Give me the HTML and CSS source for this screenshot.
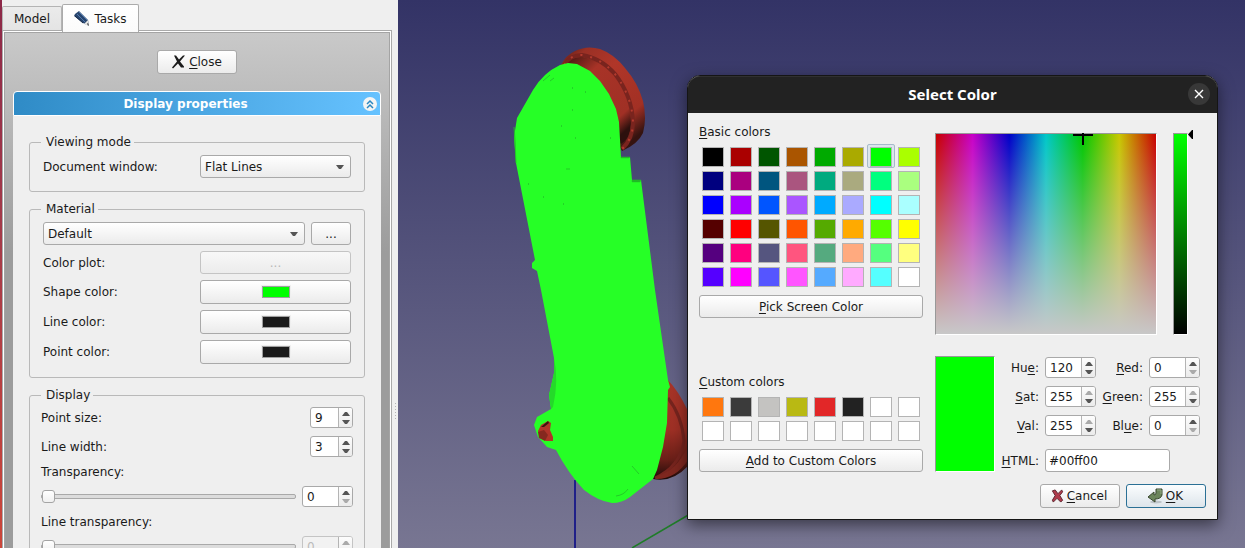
FILE: index.html
```html
<!DOCTYPE html>
<html lang="en">
<head>
<meta charset="utf-8">
<title>Select Color</title>
<link rel="stylesheet" href="styles.css">
</head>
<body>
<svg class="defs" aria-hidden="true">
  <symbol id="up" viewBox="0 0 8 4"><path d="M0 4L3 0H5L8 4Z"/></symbol>
  <symbol id="down" viewBox="0 0 8 4"><path d="M0 0H8L5 4H3Z"/></symbol>
</svg>
<div class="app">
  <div class="edge"></div>
  <aside class="dock">
    <div class="tabs" role="tablist">
      <button class="tab" role="tab">Model</button>
      <button class="tab tab-active" role="tab" aria-selected="true">
        <svg class="icon" viewBox="0 0 16 16"><path d="M1 3L5 0L14 9L15 15L9 12L0 5Z" fill="#29466f"/><path d="M3 3L11 11M5 1L13 9" stroke="#5179ad" stroke-width="1"/><path d="M1 5L9 12" stroke="#182c4b"/><path d="M10 13L14 9L15 15Z" fill="#e5e5e3"/><path d="M13 13L14 12L15 15Z" fill="#222"/></svg>
        Tasks
      </button>
    </div>
    <main class="pane">
      <div class="pane-scroll">
        <div class="close-row">
          <button class="btn close-btn">
            <svg class="icon-small" viewBox="0 0 13 13"><path d="M2 0H4L7 4L11 0H13L8 6L12 11V12H9L6 8L1 13L0 12L5 6Z" fill="#1b1b1b"/></svg>
            <span><u>C</u>lose</span>
          </button>
        </div>
        <section class="task-box">
          <header class="task-head">
            <h2>Display properties</h2>
            <button class="collapse" aria-label="Collapse"><svg viewBox="0 0 14 14"><circle cx="7" cy="7" r="7" fill="#f4f4f4"/><path d="M4 7L7 4L10 7M4 11L7 8L10 11" fill="none" stroke="#2c87c0" stroke-width="1.5"/></svg></button>
          </header>
          <div class="task-body">
            <fieldset class="group">
              <legend>Viewing mode</legend>
              <div class="row row-mode">
                <label for="mode">Document window:</label>
                <div class="combo"><select id="mode"><option>Flat Lines</option></select><svg class="arrow"><use href="#down"/></svg></div>
              </div>
            </fieldset>
            <fieldset class="group">
              <legend>Material</legend>
              <div class="material">
                <div class="combo combo-grow"><select aria-label="Material"><option>Default</option></select><svg class="arrow"><use href="#down"/></svg></div>
                <button class="btn more">...</button>
              </div>
              <div class="row row-plot"><label for="plot">Color plot:</label><button id="plot" class="btn" disabled>...</button></div>
              <div class="row row-color"><label for="shape">Shape color:</label><button id="shape" class="btn"><i class="chip chip-green"></i></button></div>
              <div class="row row-color"><label for="line">Line color:</label><button id="line" class="btn"><i class="chip"></i></button></div>
              <div class="row row-color"><label for="point">Point color:</label><button id="point" class="btn"><i class="chip"></i></button></div>
            </fieldset>
            <fieldset class="group group-display">
              <legend>Display</legend>
              <div class="line line-first"><label for="psize">Point size:</label>
                <div class="spin spin-s"><input id="psize" type="number" value="9"><div class="steps"><button aria-label="Increase"><svg><use href="#up"/></svg></button><button aria-label="Decrease"><svg><use href="#down"/></svg></button></div></div></div>
              <div class="line"><label for="lwidth">Line width:</label>
                <div class="spin spin-s"><input id="lwidth" type="number" value="3"><div class="steps"><button aria-label="Increase"><svg><use href="#up"/></svg></button><button aria-label="Decrease"><svg><use href="#down"/></svg></button></div></div></div>
              <label class="slider-label" for="transp">Transparency:</label>
              <div class="line line-slider"><input id="transp" type="range" value="0">
                <div class="spin"><input aria-label="Transparency value" type="number" value="0"><div class="steps"><button aria-label="Increase"><svg><use href="#up"/></svg></button><button aria-label="Decrease" disabled><svg><use href="#down"/></svg></button></div></div></div>
              <label class="slider-label" for="ltransp">Line transparency:</label>
              <div class="line line-slider"><input id="ltransp" type="range" value="0">
                <div class="spin spin-off"><input aria-label="Line transparency value" type="number" value="0" disabled><div class="steps"><button aria-label="Increase" disabled><svg><use href="#up"/></svg></button><button aria-label="Decrease" disabled><svg><use href="#down"/></svg></button></div></div></div>
            </fieldset>
          </div>
        </section>
      </div>
    </main>
    <div class="grip"></div>
  </aside>

  <section class="view">
    <svg class="scene" viewBox="398 0 847 548" role="img" aria-label="3D model">
      <defs>
        <linearGradient id="wheel" x1="0" y1="0" x2=".7" y2="1"><stop offset="0" stop-color="#4a1712"/><stop offset=".15" stop-color="#9a3025"/><stop offset=".4" stop-color="#b03629"/><stop offset=".82" stop-color="#a23024"/><stop offset="1" stop-color="#351310"/></linearGradient>
        <linearGradient id="inner" x1="0" y1="0" x2=".7" y2="1"><stop offset="0" stop-color="#3c1410"/><stop offset=".3" stop-color="#a83327"/><stop offset=".85" stop-color="#a03025"/><stop offset="1" stop-color="#2c100d"/></linearGradient>
        <linearGradient id="wheel2" x1="0" y1="0" x2="0" y2="1"><stop offset="0" stop-color="#a93528"/><stop offset=".5" stop-color="#9f3025"/><stop offset=".8" stop-color="#6a1f18"/><stop offset="1" stop-color="#1b0a08"/></linearGradient>
      </defs>
      <path d="M575 480V548" stroke="#202088" stroke-width="2"/>
      <path d="M632 548L690 514" stroke="#1f7c28" stroke-width="1.5"/>
      <path d="M561 65Q566 55 575 51Q587 45 600 49Q614 54 625 68Q638 83 643 101Q647 118 643 133Q638 144 622 151L600 110Z" fill="url(#wheel)"/>
      <path d="M565 64Q572 56 583 57Q604 62 618 80Q631 99 631 124Q630 139 621 144L600 120Z" fill="url(#inner)"/>
      <path d="M564 65Q570 55 582 55Q601 58 615 74Q632 96 633 122Q633 139 622 149" fill="none" stroke="#79241e" stroke-width="4"/>
      <path d="M564 65Q570 55 582 55Q601 58 615 74Q632 96 633 122Q633 139 622 149" fill="none" stroke="#b43a2e" stroke-width="2" stroke-dasharray="2 8"/>
      <path d="M667 379Q678 390 688 411V466Q672 483 653 479Z" fill="url(#wheel2)"/>
      <path d="M668 398Q682 416 684 441Q680 467 655 478" fill="none" stroke="#76241e" stroke-width="3"/>
      <path d="M688 460Q675 480 655 479L660 475Q676 470 687 448Z" fill="#7e271f"/>
      <path d="M568 63L577 64L590 71L600 81L609 94L616 109L619 122L621 157H630L632 180H641L655 290L668 380L670 387L668 390L667 423L663 447L657 470L653 479L630 497Q622 503 612 503Q598 501 584 490Q568 473 556 450L547 447L538 437L534 425L537 417L551 409L549 395L554 373V358L541 290L537 271L532 268V263L535 260L516 163L514 137L517 118L533 90Q543 73 560 65Z" fill="#26ff26"/>
      <path d="M554 358Q559 380 553 407L551 409L549 395L554 373Z" fill="#25d92a"/>
      <path d="M514 127L516 163L515 137ZM621 157H630L629 158H621ZM632 180H641L640 182H632Z" fill="#22b427" stroke="#22c427" stroke-width=".5"/>
      <path d="M543 81L550 75M550 81L554 78M632 466L639 474M616 496Q624 495 628 489M566 169H570" fill="none" stroke="#22b427" stroke-width=".7"/>
      <path d="M572 88h1M585 92h1M572 110h1M561 126h1M575 138h1M610 138h1M528 184h1M543 197h1M563 204h1" stroke="#21a827"/>
      <path d="M541 425L548 421L551 423L550 430L553 437V441L546 441L540 437L538 431Z" fill="#b03429"/>
      <path d="M538 432L544 430L548 435L545 441L539 438Z" fill="#85281f"/><path d="M541 427L548 421L549 423L544 427Z" fill="#3a140f"/>
    </svg>
  </section>

  <div class="dialog" role="dialog" aria-labelledby="dlg-title">
    <header class="titlebar">
      <h1 id="dlg-title">Select Color</h1>
      <button class="win-close" aria-label="Close dialog"><svg viewBox="0 0 22 22"><path d="M7 7L15 15M15 7L7 15" stroke="#fff" stroke-width="1.4"/></svg></button>
    </header>
    <div class="dialog-body">
      <div class="palettes">
        <h3><u>B</u>asic colors</h3>
        <div class="grid">
          <button style="--c:#000000" aria-label="#000000"></button><button style="--c:#aa0000" aria-label="#aa0000"></button><button style="--c:#005500" aria-label="#005500"></button><button style="--c:#aa5500" aria-label="#aa5500"></button><button style="--c:#00aa00" aria-label="#00aa00"></button><button style="--c:#aaaa00" aria-label="#aaaa00"></button><button class="selected" style="--c:#00ff00" aria-label="#00ff00"></button><button style="--c:#aaff00" aria-label="#aaff00"></button>
          <button style="--c:#00007f" aria-label="#00007f"></button><button style="--c:#aa007f" aria-label="#aa007f"></button><button style="--c:#00557f" aria-label="#00557f"></button><button style="--c:#aa557f" aria-label="#aa557f"></button><button style="--c:#00aa7f" aria-label="#00aa7f"></button><button style="--c:#aaaa7f" aria-label="#aaaa7f"></button><button style="--c:#00ff7f" aria-label="#00ff7f"></button><button style="--c:#aaff7f" aria-label="#aaff7f"></button>
          <button style="--c:#0000ff" aria-label="#0000ff"></button><button style="--c:#aa00ff" aria-label="#aa00ff"></button><button style="--c:#0055ff" aria-label="#0055ff"></button><button style="--c:#aa55ff" aria-label="#aa55ff"></button><button style="--c:#00aaff" aria-label="#00aaff"></button><button style="--c:#aaaaff" aria-label="#aaaaff"></button><button style="--c:#00ffff" aria-label="#00ffff"></button><button style="--c:#aaffff" aria-label="#aaffff"></button>
          <button style="--c:#550000" aria-label="#550000"></button><button style="--c:#ff0000" aria-label="#ff0000"></button><button style="--c:#555500" aria-label="#555500"></button><button style="--c:#ff5500" aria-label="#ff5500"></button><button style="--c:#55aa00" aria-label="#55aa00"></button><button style="--c:#ffaa00" aria-label="#ffaa00"></button><button style="--c:#55ff00" aria-label="#55ff00"></button><button style="--c:#ffff00" aria-label="#ffff00"></button>
          <button style="--c:#55007f" aria-label="#55007f"></button><button style="--c:#ff007f" aria-label="#ff007f"></button><button style="--c:#55557f" aria-label="#55557f"></button><button style="--c:#ff557f" aria-label="#ff557f"></button><button style="--c:#55aa7f" aria-label="#55aa7f"></button><button style="--c:#ffaa7f" aria-label="#ffaa7f"></button><button style="--c:#55ff7f" aria-label="#55ff7f"></button><button style="--c:#ffff7f" aria-label="#ffff7f"></button>
          <button style="--c:#5500ff" aria-label="#5500ff"></button><button style="--c:#ff00ff" aria-label="#ff00ff"></button><button style="--c:#5555ff" aria-label="#5555ff"></button><button style="--c:#ff55ff" aria-label="#ff55ff"></button><button style="--c:#55aaff" aria-label="#55aaff"></button><button style="--c:#ffaaff" aria-label="#ffaaff"></button><button style="--c:#55ffff" aria-label="#55ffff"></button><button style="--c:#ffffff" aria-label="#ffffff"></button>
        </div>
        <button class="btn wide"><span><u>P</u>ick Screen Color</span></button>
        <h3 class="custom-title"><u>C</u>ustom colors</h3>
        <div class="grid">
          <button style="--c:#ff770e" aria-label="Custom 1"></button><button style="--c:#3b3b3b" aria-label="Custom 2"></button><button style="--c:#c4c3c1" aria-label="Custom 3"></button><button style="--c:#b9b913" aria-label="Custom 4"></button><button style="--c:#e22728" aria-label="Custom 5"></button><button style="--c:#222222" aria-label="Custom 6"></button><button style="--c:#fff" aria-label="Custom 7"></button><button style="--c:#fff" aria-label="Custom 8"></button>
          <button style="--c:#fff" aria-label="Custom 9"></button><button style="--c:#fff" aria-label="Custom 10"></button><button style="--c:#fff" aria-label="Custom 11"></button><button style="--c:#fff" aria-label="Custom 12"></button><button style="--c:#fff" aria-label="Custom 13"></button><button style="--c:#fff" aria-label="Custom 14"></button><button style="--c:#fff" aria-label="Custom 15"></button><button style="--c:#fff" aria-label="Custom 16"></button>
        </div>
        <button class="btn wide"><span><u>A</u>dd to Custom Colors</span></button>
      </div>
      <div class="picker">
        <div class="fields">
          <div class="sunken hue"><svg class="cross" viewBox="0 0 20 12"><path d="M0 2H20M10 0V12" stroke="#000" stroke-width="2"/></svg></div>
          <div class="sunken value"></div>
          <svg class="marker" viewBox="0 0 5 9"><path d="M0 4.5L4 0H5V9H4Z"/></svg>
        </div>
        <div class="values">
          <div class="sunken preview"></div>
          <div class="numbers">
            <label for="h">Hu<u>e</u>:</label><div class="spin"><input id="h" type="number" value="120"><div class="steps"><button aria-label="Increase"><svg><use href="#up"/></svg></button><button aria-label="Decrease"><svg><use href="#down"/></svg></button></div></div>
            <label for="r"><u>R</u>ed:</label><div class="spin"><input id="r" type="number" value="0"><div class="steps"><button aria-label="Increase"><svg><use href="#up"/></svg></button><button aria-label="Decrease" disabled><svg><use href="#down"/></svg></button></div></div>
            <label for="s"><u>S</u>at:</label><div class="spin"><input id="s" type="number" value="255"><div class="steps"><button aria-label="Increase" disabled><svg><use href="#up"/></svg></button><button aria-label="Decrease"><svg><use href="#down"/></svg></button></div></div>
            <label for="g"><u>G</u>reen:</label><div class="spin"><input id="g" type="number" value="255"><div class="steps"><button aria-label="Increase" disabled><svg><use href="#up"/></svg></button><button aria-label="Decrease"><svg><use href="#down"/></svg></button></div></div>
            <label for="v"><u>V</u>al:</label><div class="spin"><input id="v" type="number" value="255"><div class="steps"><button aria-label="Increase" disabled><svg><use href="#up"/></svg></button><button aria-label="Decrease"><svg><use href="#down"/></svg></button></div></div>
            <label for="b">Bl<u>u</u>e:</label><div class="spin"><input id="b" type="number" value="0"><div class="steps"><button aria-label="Increase"><svg><use href="#up"/></svg></button><button aria-label="Decrease" disabled><svg><use href="#down"/></svg></button></div></div>
            <label class="html-label" for="html"><u>H</u>TML:</label><input class="html-input" id="html" type="text" value="#00ff00">
          </div>
        </div>
        <div class="actions">
          <button class="btn"><svg class="icon-small" viewBox="0 0 13 15"><path d="M1 2L4 1L7 5L11 1L12 3L9 7L12 12L10 14L6 10L2 14L1 12L4 7Z" fill="#b03a4c" stroke="#58232c"/></svg><span><u>C</u>ancel</span></button>
          <button class="btn primary"><svg class="icon" viewBox="0 0 16 16"><ellipse cx="9" cy="14" rx="6" ry="1.5" fill="#bcc3c8"/><path d="M9 1H15V7Q14 11 8 11V14L1 9L7 4V7Q9 7 9 5Z" fill="#6b855b" stroke="#39472f"/><path d="M10 2H14V6" fill="none" stroke="#94a884"/></svg><span><u>O</u>K</span></button>
        </div>
      </div>
    </div>
  </div>
</div>
</body>
</html>
```

FILE: styles.css
```css
* { box-sizing: border-box; }
body, button, input, select { font: 12px/16px "DejaVu Sans", sans-serif; color: #1a1a1a; }
body { margin: 0; overflow: hidden; background: #efefef; }
h1, h2, h3 { margin: 0; }
h3 { font-size: 12px; font-weight: 400; }
button { padding: 0; margin: 0; }
u { text-underline-offset: 2px; }
svg { display: block; }
.defs { position: absolute; width: 0; height: 0; }

.app { position: relative; display: flex; height: 100vh; overflow: hidden; }
.edge { flex: none; width: 2px; background: linear-gradient(#8c2848, #a33a4a 40%, #cb463a); }

/* Left dock */
.dock { position: relative; flex: none; width: 396px; display: flex; flex-direction: column; padding: 4px 6px 0 0; }
.tabs { display: flex; align-items: flex-end; height: 26px; }
.tab { height: 24px; width: 60px; border: 1px solid #b4b4b4; border-bottom: 0; border-radius: 2px 2px 0 0; background: linear-gradient(#ebebeb, #e4e4e4); display: flex; align-items: center; justify-content: center; gap: 4px; }
.tab-active { position: relative; z-index: 1; width: 77px; height: 28px; margin-bottom: -2px; background: linear-gradient(#fff, #fbfbfb); border-color: #ababab; }
.icon { width: 16px; height: 16px; }
.icon-small { width: 13px; height: 14px; }
.pane { flex: none; border: 1px solid #aaa; padding: 1px; background: #fff; }
.pane-scroll { border: 1px solid #a4a4a4; background: linear-gradient(#c9c9c9, #9c9c9c 220px); padding: 17px 8px 10px 8px; }
.close-row { display: flex; justify-content: center; padding-bottom: 17px; }
.btn { height: 24px; border: 1px solid #a9a9a9; border-radius: 3px; background: linear-gradient(#fff, #ebebeb); display: flex; align-items: center; justify-content: center; gap: 4px; }
.btn:disabled { color: #b8b8b8; border-color: #c4c4c4; background: linear-gradient(#f8f8f8, #ececec); }
.close-btn { width: 80px; }
.task-head { height: 25px; border: 1px solid #fff; border-radius: 4px 4px 0 0; background: linear-gradient(90deg, #2f8bc6, #66c2ff); display: flex; align-items: center; padding-right: 3px; }
.task-head h2 { flex: 1; padding-right: 6px; text-align: center; color: #fff; font-size: 12px; }
.collapse { width: 14px; height: 14px; border: 0; background: none; }
.task-body { background: #efefef; padding: 18px 16px 16px; display: flex; flex-direction: column; gap: 9px; }

.group { margin: 0; min-width: 0; border: 1px solid #b9b9b9; border-radius: 3px; padding: 5px 13px 13px; }
.group legend { height: 16px; padding: 0 3px 0 5px; margin-left: -2px; }
.row { display: grid; grid-template-columns: 157px 1fr; align-items: center; }
.row .btn { width: 100%; }
.row-plot { margin: 6px 0; }
.row-plot .btn { height: 23px; }
.row-color + .row-color { margin-top: 6px; }
.combo { position: relative; }
.combo-grow { flex: 1; }
select { appearance: none; display: block; width: 100%; height: 23px; padding: 0 20px 0 4px; border: 1px solid #a9a9a9; border-radius: 3px; background: linear-gradient(#fff, #ebebeb); }
.arrow { position: absolute; right: 7px; top: 10px; width: 8px; height: 4px; fill: #555; pointer-events: none; }
.material { display: flex; gap: 6px; }
.more { width: 40px; height: 23px; }
.chip { width: 28px; height: 12px; background: #1a1a1a; border: 1px solid #a0a0a0; outline: 1px solid #efefef; }
.chip-green { background: #0f0; }
.group-display { padding: 3px 11px 13px; }
.group-display legend { margin-left: 0; }
.line { display: flex; justify-content: space-between; align-items: center; margin-bottom: 8px; }
.line-first { margin-top: 1px; }
.line-slider { gap: 6px; margin: 6px 0 8px; }
.slider-label { display: block; height: 16px; margin-top: -1px; }
input[type="range"] { appearance: none; flex: 1; min-width: 0; height: 14px; margin: 0; background: none; }
input[type="range"]::-webkit-slider-runnable-track { height: 5px; border: 1px solid #a9a9a9; border-radius: 2px; background: #dcdcdc; }
input[type="range"]::-webkit-slider-thumb { appearance: none; width: 13px; height: 13px; margin-top: -5px; border: 1px solid #a4a4a4; border-radius: 3px; background: linear-gradient(#fff, #f0f0f0); }

.spin { flex: none; width: 51px; height: 21px; display: flex; border: 1px solid #a9a9a9; border-radius: 3px; background: #fff; overflow: hidden; }
.spin-s { width: 43px; }
.spin input { appearance: textfield; flex: 1; min-width: 0; width: 0; border: 0; padding: 0 0 0 4px; background: none; outline: 0; }
.spin input::-webkit-inner-spin-button { appearance: none; }
.steps { width: 14px; border-left: 1px solid #b4b4b4; display: flex; flex-direction: column; gap: 4px; justify-content: center; align-items: center; background: linear-gradient(#fdfdfd, #ebebeb); }
.steps button { width: 8px; height: 4px; border: 0; background: none; }
.steps svg { width: 8px; height: 4px; fill: #555; }
.steps button:disabled svg { fill: #aaa; }
.spin-off { background: #f2f2f2; border-color: #c4c4c4; }
.spin-off input { color: #bbb; }
.grip { position: absolute; right: 2px; top: 403px; width: 1px; height: 17px; background: repeating-linear-gradient(#b5b5b5 0 1px, transparent 1px 3px); }

/* 3D view */
.view { position: relative; flex: 1; min-width: 0; overflow: hidden; background: linear-gradient(#333366, #787692); }
.scene { width: 847px; height: 548px; }

/* Color dialog */
.dialog { position: absolute; top: 75px; right: 27px; width: 531px; border: 1px solid #151515; border-radius: 13px 13px 0 0; background: #efefef; box-shadow: 0 5px 16px rgba(0,0,0,.5); }
.titlebar { position: relative; height: 37px; display: flex; align-items: center; justify-content: center; border-radius: 12px 12px 0 0; background: #222; border-top: 1px solid #303030; padding-bottom: 2px; }
.titlebar h1 { font: 700 15px/20px "Noto Sans", sans-serif; color: #fff; }
.win-close { position: absolute; right: 7px; top: 6px; width: 22px; height: 22px; border: 0; border-radius: 50%; background: #383838; }
.dialog-body { display: flex; gap: 12px; padding: 11px 11px 11px; }
.palettes { flex: none; width: 224px; }
.grid { display: grid; grid-template-columns: repeat(8, 1fr); grid-auto-rows: 24px; margin: 4px 0 7px; }
.grid button { border: 1px solid transparent; background: none; padding: 2px; display: flex; }
.grid button::before { content: ""; flex: 1; height: 18px; border: 1px solid #b4b4b4; background: var(--c); }
.grid .selected { border-color: #a6bac9; border-radius: 2px; background: #dce6ed; }
.wide { width: 100%; height: 23px; }
.custom-title { margin-top: 56px; }
.picker { flex: 1; min-width: 0; padding-top: 9px; }
.sunken { border: 1px solid; border-color: #999 #fff #fff #999; }
.fields { display: flex; height: 202px; }
.hue { position: relative; width: 222px; background: linear-gradient(rgba(200,200,200,0), #c8c8c8), linear-gradient(90deg, #c80000, #c800c8, #0000c8, #00c8c8, #00c800, #c8c800, #c80000); }
.cross { position: absolute; left: 137px; top: -1px; width: 20px; height: 12px; }
.value { width: 15px; margin-left: 16px; background: linear-gradient(#0f0, #000); }
.marker { width: 5px; height: 9px; margin-top: -3px; }
.values { display: flex; gap: 6px; margin-top: 21px; height: 116px; }
.preview { flex: none; width: 60px; background: #0f0; }
.numbers { display: grid; grid-template-columns: 38px 51px 41px 51px; column-gap: 6px; row-gap: 8px; grid-template-rows: 21px 21px 21px 23px; align-content: start; align-items: center; padding-top: 1px; }
.numbers label { justify-self: end; white-space: nowrap; }
.html-label, .html-input { margin-top: 10px; }
.html-input { grid-column: span 3; width: 125px; height: 23px; border: 1px solid #a9a9a9; border-radius: 3px; padding: 0 3px; background: #fff; }
.actions { display: flex; justify-content: flex-end; gap: 6px; margin-top: 12px; }
.actions .btn { width: 80px; gap: 3px; padding-right: 2px; }
.primary { border-color: #2b7095; background: linear-gradient(#fbfdfe, #dde5eb); }
```
